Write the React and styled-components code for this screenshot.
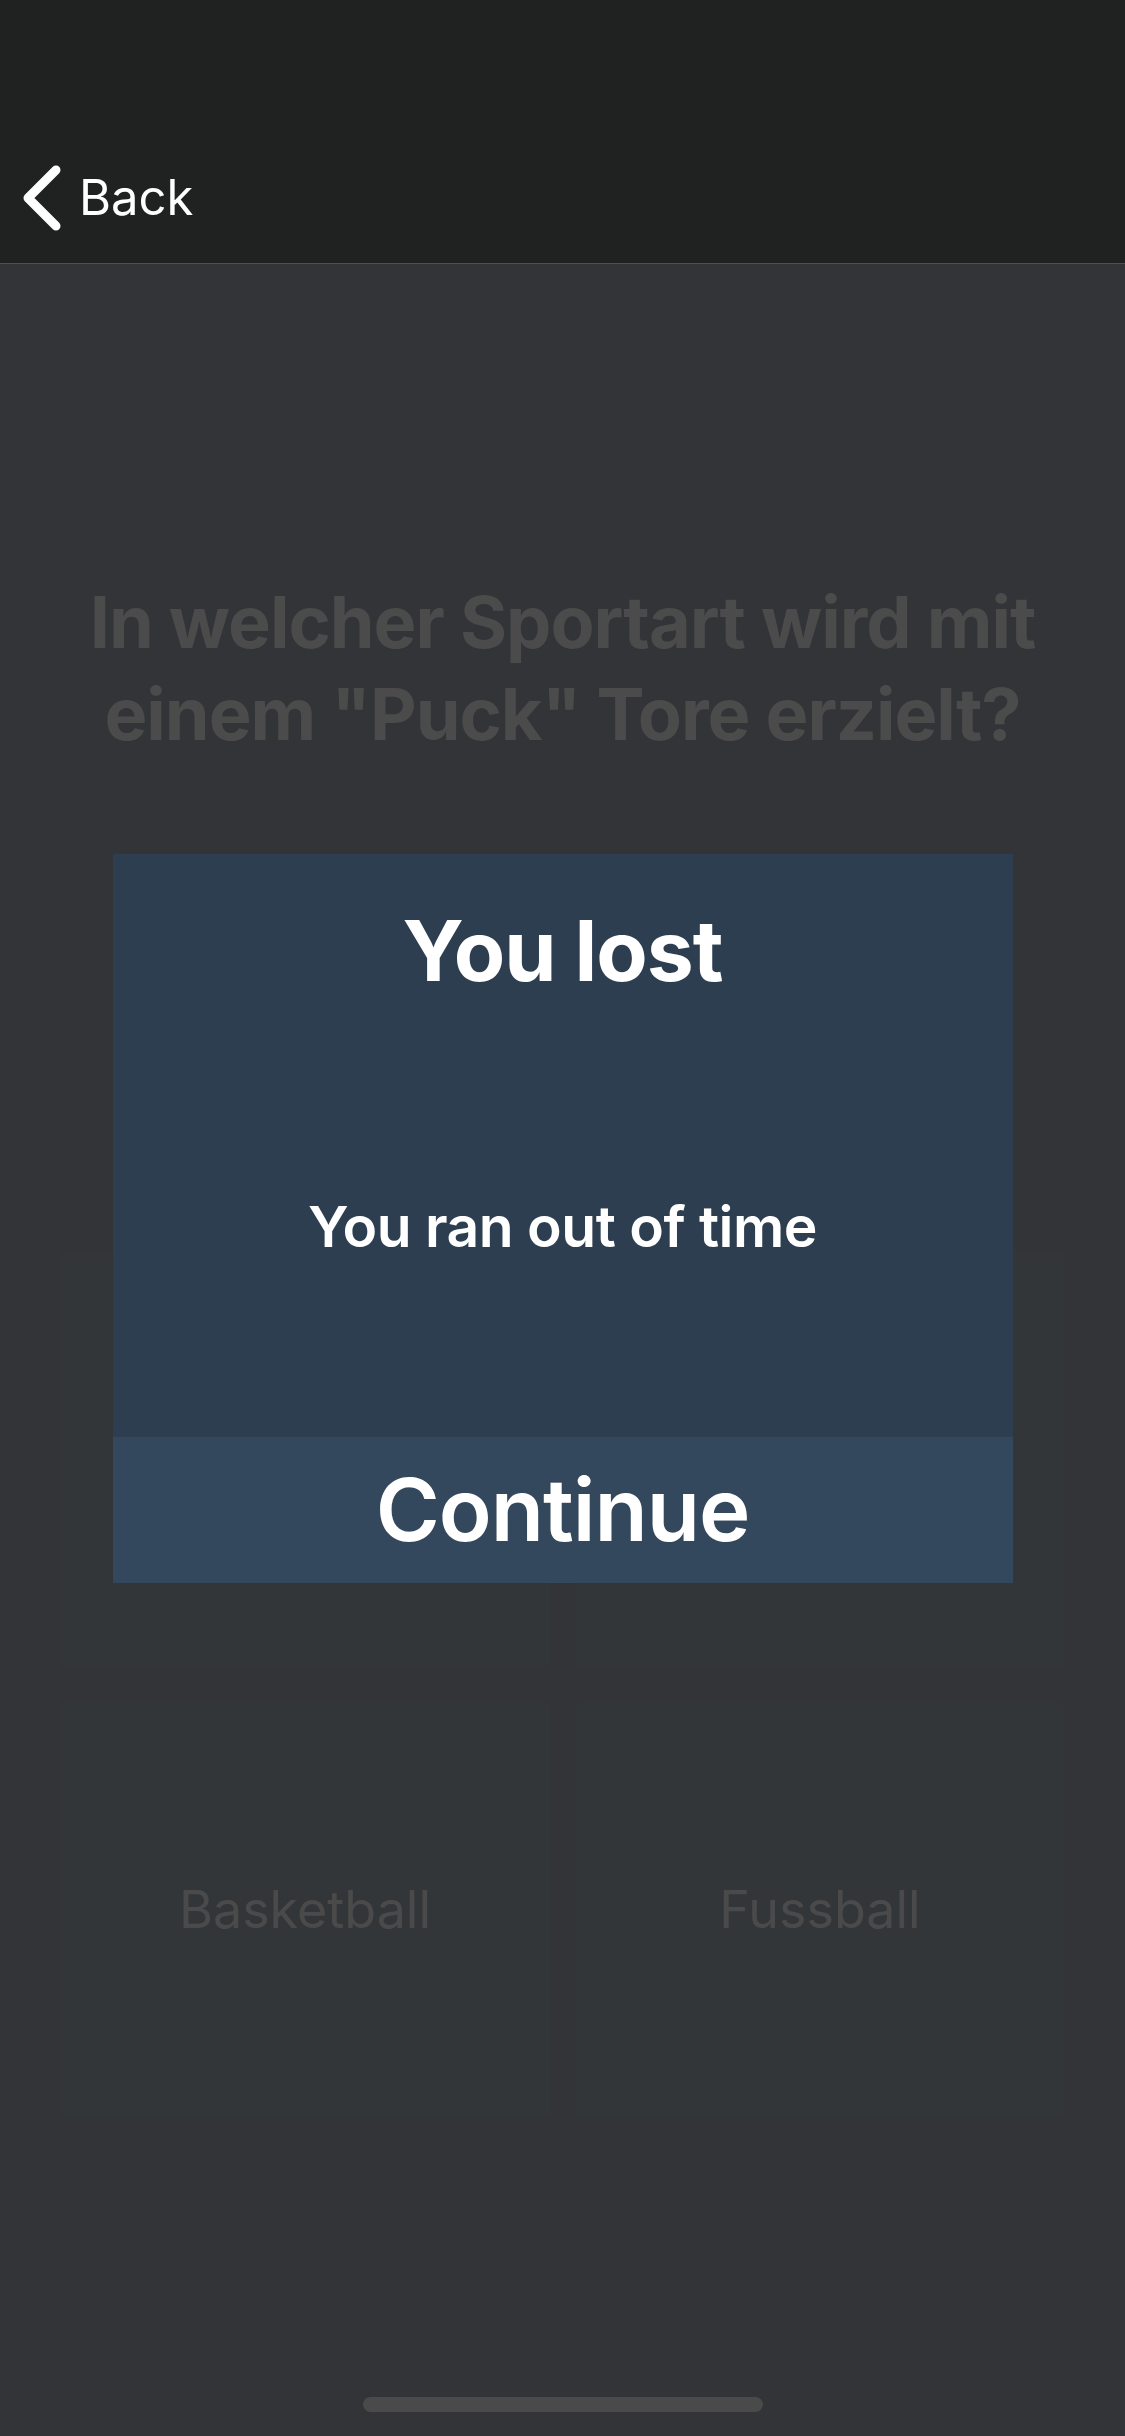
import React from "react";
import styled, { createGlobalStyle } from "styled-components";

const GlobalStyle = createGlobalStyle`
  html, body {
    margin: 0;
    padding: 0;
    background: #333438;
    font-family: Inter, "Noto Sans", "Liberation Sans", sans-serif;
  }
`;

const Screen = styled.div`
  position: relative;
  width: 1125px;
  height: 2436px;
  overflow: hidden;
  display: flex;
  flex-direction: column;
  background: #333438;
`;

const Header = styled.header`
  padding-top: 132px;
  height: 131px;
  background: #202221;
  border-bottom: 1px solid #4e4f51;
  display: flex;
  align-items: center;
`;

const BackButton = styled.button`
  display: flex;
  align-items: center;
  gap: 17px;
  margin-left: 22px;
  padding: 0;
  border: 0;
  background: none;
  color: #ffffff;
  font-family: inherit;
  font-size: 49px;
  font-weight: 400;
  cursor: pointer;
`;

const Question = styled.h1`
  margin: 312px 40px 0;
  font-size: 72px;
  line-height: 92px;
  font-weight: 700;
  letter-spacing: -1px;
  color: #4b4b4b;
  text-align: center;
`;

const AnswerGrid = styled.div`
  margin: 492px 0 0 60px;
  width: 1005px;
  display: grid;
  grid-template-columns: 490px 490px;
  grid-template-rows: 415px 415px;
  column-gap: 25px;
  row-gap: 35px;
`;

const Answer = styled.div`
  display: flex;
  align-items: center;
  justify-content: center;
  border-radius: 6px;
  background: #333639;
  color: #4a4a4a;
  font-size: 52px;
  font-weight: 400;
`;

const Overlay = styled.div`
  position: absolute;
  inset: 0;
  display: flex;
  align-items: center;
  justify-content: center;
`;

const Modal = styled.div`
  width: 900px;
  height: 729px;
  display: flex;
  flex-direction: column;
  background: #2d3e51;
  color: #ffffff;
  text-align: center;
`;

const Title = styled.h2`
  margin: 0;
  padding-top: 47px;
  font-size: 84px;
  line-height: 100px;
  font-weight: 700;
  letter-spacing: -1px;
`;

const Message = styled.p`
  flex: 1;
  margin: 0;
  padding-top: 16px;
  display: flex;
  align-items: center;
  justify-content: center;
  font-size: 57px;
  line-height: 70px;
  font-weight: 600;
  letter-spacing: -0.5px;
`;

const ContinueButton = styled.button`
  height: 146px;
  border: 0;
  padding: 0;
  background: #34485d;
  color: #ffffff;
  font-family: inherit;
  font-size: 87px;
  font-weight: 600;
  letter-spacing: -1px;
  cursor: pointer;
`;

const HomeIndicator = styled.div`
  position: absolute;
  left: 50%;
  bottom: 24px;
  width: 400px;
  height: 15px;
  margin-left: -200px;
  border-radius: 8px;
  background: #4a4a4a;
`;

const Chevron = () => (
  <svg width="40" height="66" viewBox="0 0 40 66" fill="none">
    <polyline
      points="34,5 6,33 34,61"
      stroke="#ffffff"
      strokeWidth="9"
      strokeLinecap="round"
      strokeLinejoin="round"
    />
  </svg>
);

// the first row sits under the dialog, so its labels are not drawn
const answers = ["", "", "Basketball", "Fussball"];

export default function App() {
  return (
    <>
      <GlobalStyle />
      <Screen>
        <Header>
          <BackButton>
            <Chevron />
            Back
          </BackButton>
        </Header>

        <Question>
          In welcher Sportart wird mit
          <br />
          einem "Puck" Tore erzielt?
        </Question>

        <AnswerGrid>
          {answers.map((a, i) => (
            <Answer key={i}>{a}</Answer>
          ))}
        </AnswerGrid>

        <Overlay>
          <Modal>
            <Title>You lost</Title>
            <Message>You ran out of time</Message>
            <ContinueButton>Continue</ContinueButton>
          </Modal>
        </Overlay>

        <HomeIndicator />
      </Screen>
    </>
  );
}
